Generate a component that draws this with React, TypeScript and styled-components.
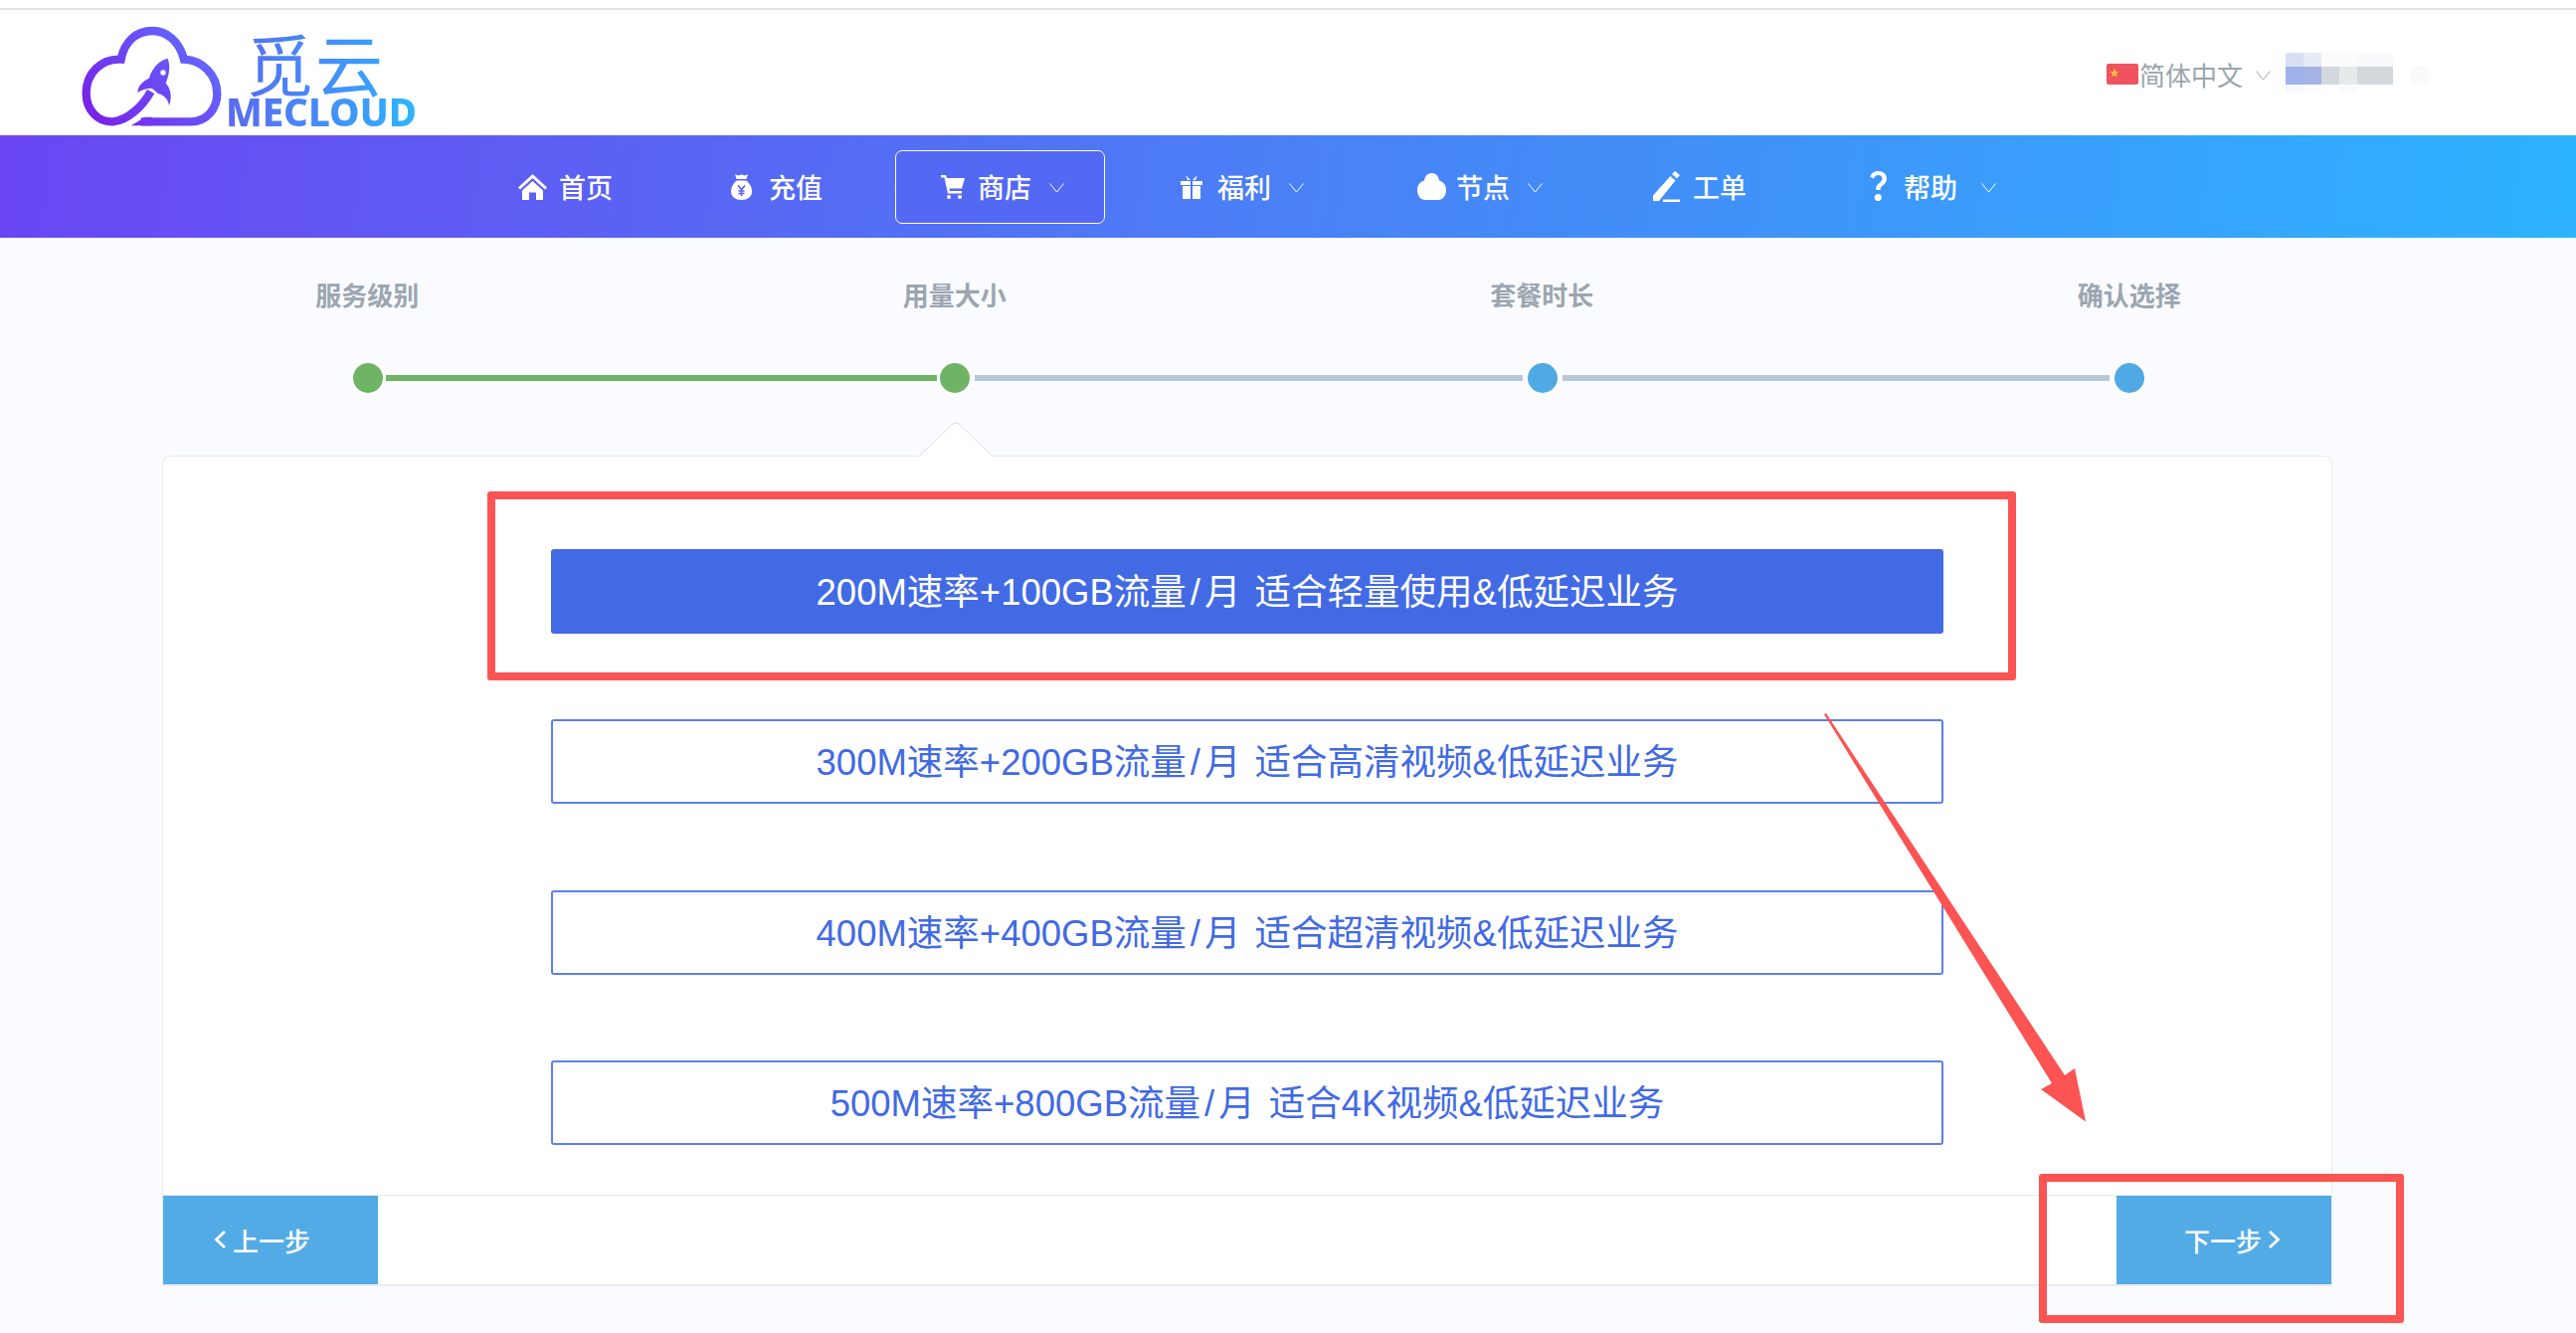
import { ReactNode } from "react"
import styled, { createGlobalStyle } from "styled-components"

const CJK = `"Liberation Sans", "Noto Sans CJK SC", sans-serif`

const GlobalStyle = createGlobalStyle`
	html, body {
		margin: 0;
		padding: 0;
		background: #fafbff;
		font-family: ${CJK};
	}
	* {
		box-sizing: border-box;
	}
`

/* ---------- data ---------- */

const mosaicRows = [
	["#d9dff5", "#e6eaf8", "#fafbfb", "#fafbfb", "#f8f9fa", "#f8f9fa", "#ffffff", "#ffffff"],
	["#a0b2ea", "#a5b4e4", "#d3d8dc", "#e6e9ea", "#d3d8dc", "#d3d8dc", "#ffffff", "#fafafa"],
	["#f7f8fd", "#fcfcfe", "#ffffff", "#fbfbfb", "#ffffff", "#ffffff", "#ffffff", "#ffffff"]
]

const options = [
	["200M速率+100GB流量", "月 适合轻量使用&低延迟业务"],
	["300M速率+200GB流量", "月 适合高清视频&低延迟业务"],
	["400M速率+400GB流量", "月 适合超清视频&低延迟业务"],
	["500M速率+800GB流量", "月 适合4K视频&低延迟业务"]
]

const steps = [
	{ label: "服务级别", color: "#6fb365" },
	{ label: "用量大小", color: "#6fb365" },
	{ label: "套餐时长", color: "#4fa9e4" },
	{ label: "确认选择", color: "#4fa9e4" }
]

/* ---------- icons ---------- */

const HomeIcon = () => (
	<svg width="29" height="26" viewBox="0 0 29 26" fill="#fff">
		<path d="M14.5 0 29 13.5l-2 2L14.5 4 2 15.500l-2-2z" />
		<path d="M14.500 7 25 16.500V26h-7v-7.500h-7V26H4v-9.500z" />
	</svg>
)

const BagIcon = () => (
	<svg width="21" height="26" viewBox="0 0 21 26">
		<path fill="#fff" d="M4 0l3 1.500L10.500.5 14 1.500 17 0l-1.500 5h-10z" />
		<path fill="#fff" d="M6 6.500h9c3 2 6 6 6 11 0 5.500-4.500 8.500-10.500 8.500S0 23 0 17.500c0-5 3-9 6-11z" />
		<path fill="none" stroke="#5560f0" strokeWidth="1.500" d="M7 11.500l3.500 4 3.500-4M10.500 15.500V22M7.500 17h6M7.500 19.500h6" />
	</svg>
)

const CartIcon = () => (
	<svg width="24" height="24" viewBox="0 0 24 24" fill="#fff">
		<path d="M0 0h5l1 3h18l-3 10.500H8.500l.5 2.500h12v2.500H7L3.500 2.500H0z" />
		<circle cx="8" cy="22" r="2" />
		<circle cx="19" cy="22" r="2" />
	</svg>
)

const GiftIcon = () => (
	<svg width="22" height="24" viewBox="0 0 22 24" fill="#fff">
		<path d="M0 6h10v4H0zM12 6h10v4H12zM2 11h8v13H2zM12 11h8v13h-8z" />
		<path d="M5 0l5 5H7zM17 0l-5 5h3z" />
	</svg>
)

const CloudIcon = () => (
	<svg width="29" height="27" viewBox="0 0 29 27" fill="#fff">
		<path d="M14.500 0c4 0 7 3 7.500 7.500 4 1 7 4.500 7 9.500 0 6-3.500 10-8 10H8c-4.500 0-8-4-8-10 0-5 3-8.500 7-9.500C7.500 3 10.500 0 14.500 0z" />
	</svg>
)

const PenIcon = () => (
	<svg width="27" height="32" viewBox="0 0 27 32" fill="#fff">
		<path d="M19 3 22 0l5 4-3 3.500zM17.500 5l5 4.500L6 30H0v-5.500z" />
		<path d="M10 28.500h17V31H10z" />
	</svg>
)

const QuestionIcon = () => (
	<svg width="17" height="31" viewBox="0 0 17 31" fill="#fff">
		<path d="M0 5.500C1.500 2 4.500 0 8.500 0 13.500 0 17 3 17 7.500c0 3.500-2 5.500-4.500 7.500-1.500 1.200-2 2-2 4H6c0-3.500 1-5 3.500-7 1.800-1.500 3-2.700 3-4.500 0-2.200-1.800-3.500-4-3.500S4.800 5.200 4 7.500z" />
		<circle cx="8.200" cy="26.500" r="3.500" />
	</svg>
)

const Chevron = ({ gap = 18 }: { gap?: number }) => (
	<ChevronSvg viewBox="0 0 15 10" $gap={gap}>
		<path d="M.5.500l7 8.500 7-8.500" fill="none" stroke="currentColor" strokeWidth="1" />
	</ChevronSvg>
)

const LogoMark = () => (
	<svg width="160" height="120" viewBox="0 0 480 360">
		<defs>
			<linearGradient id="logoStroke" gradientUnits="userSpaceOnUse" x1="70" y1="330" x2="400" y2="60">
				<stop offset="0" stopColor="#7a1fe8" />
				<stop offset="1" stopColor="#5f6cff" />
			</linearGradient>
		</defs>
		<path
			fill="none"
			stroke="url(#logoStroke)"
			strokeWidth="25"
			d="M215 316H365C415 316 445 275 445 232C445 175 400 130 345 128C330 70 290 42 250 42C200 42 165 75 155 128C95 125 50 170 50 230C50 280 85 318 130 316C175 312 220 270 245 225"
		/>
		<path fill="url(#logoStroke)" d="M185 328 228 302H250V328Z" />
		<path
			fill="url(#logoStroke)"
			d="M296 125C270 130 248 155 240 185C218 195 205 210 205 228C220 218 235 215 248 215L268 232C285 235 298 250 300 268C310 240 305 215 290 200C300 175 305 150 296 125Z"
		/>
		<circle cx="282" cy="168" r="8" fill="#fff" />
	</svg>
)

const NextArrow = () => (
	<ArrowSvg viewBox="0 0 290 440">
		<path fill="#fc5353" d="M12 10 14 9 254 373 264 366 275 419.500 230 387 241 381Z" />
	</ArrowSvg>
)

/* ---------- page ---------- */

interface NavEntry {
	icon: ReactNode
	label: string
	gap: number
	after?: number
	chevronGap?: number
	menu?: boolean
	active?: boolean
}

const navItems: NavEntry[] = [
	{ icon: <HomeIcon />, label: "首页", gap: 12 },
	{ icon: <BagIcon />, label: "充值", gap: 17 },
	{ icon: <CartIcon />, label: "商店", gap: 13, after: 3, menu: true, active: true },
	{ icon: <GiftIcon />, label: "福利", gap: 15, menu: true },
	{ icon: <CloudIcon />, label: "节点", gap: 10, after: -3, menu: true },
	{ icon: <PenIcon />, label: "工单", gap: 13, after: 5 },
	{ icon: <QuestionIcon />, label: "帮助", gap: 17, chevronGap: 24, menu: true }
]

const App = () => (
	<Page>
		<GlobalStyle />
		<TopStrip />
		<Header>
			<Logo>
				<LogoMark />
				<LogoText>
					<LogoHan>觅云</LogoHan>
					<LogoLatin>MECLOUD</LogoLatin>
				</LogoText>
			</Logo>
			<UserArea>
				<LangSwitch>
					<Flag>
						<svg width="12" height="14" viewBox="0 0 12 14" fill="#f7c232">
							<path d="M6 3l1.300 3 3 .2-2.300 2 .8 3.200L6 9.600 3.200 11.400 4 8.200 1.700 6.200l3-.2z" />
						</svg>
					</Flag>
					简体中文
					<LangChevron>
						<Chevron />
					</LangChevron>
				</LangSwitch>
				<Mosaic>
					{mosaicRows.flat().map((color, i) => (
						<div key={i} style={{ background: color }} />
					))}
				</Mosaic>
			</UserArea>
		</Header>
		<Nav>
			{navItems.map(item => (
				<NavItem key={item.label} $active={item.active} $menu={item.menu} $after={item.after ?? 0}>
					<NavIcon $gap={item.gap}>{item.icon}</NavIcon>
					{item.label}
					{item.menu && <Chevron gap={item.chevronGap} />}
				</NavItem>
			))}
		</Nav>
		<Labels>
			{steps.map(step => (
				<StepLabel key={step.label}>{step.label}</StepLabel>
			))}
		</Labels>
		<Track>
			{steps.map((step, i) => (
				<TrackPart key={step.label} $last={i === steps.length - 1}>
					<Dot $color={step.color} />
					{i < steps.length - 1 && <Connector $done={i === 0} />}
				</TrackPart>
			))}
		</Track>
		<Card>
			<Notch viewBox="0 0 76 36">
				<path d="M0 35.500 35 2Q38 0 41 2L76 35.500" fill="#fff" stroke="#d8dce4" strokeWidth="1" />
			</Notch>
			<OptionList>
				{options.map(([before, after], i) => (
					<OptionButton key={before} $selected={i === 0}>
						{before}
						<Slash>/</Slash>
						{after}
					</OptionButton>
				))}
			</OptionList>
			<CardFooter>
				<StepButton $shift="right">
					<ButtonChevron viewBox="0 0 13 18">
						<path d="M11 1 2.500 9l8.500 8" />
					</ButtonChevron>
					上一步
				</StepButton>
				<StepButton $shift="left">
					下一步
					<ButtonChevron viewBox="0 0 13 18">
						<path d="M2 1l8.500 8L2 17" />
					</ButtonChevron>
				</StepButton>
			</CardFooter>
		</Card>
		<HighlightOption />
		<HighlightNext />
		<NextArrow />
	</Page>
)

export default App

// Styled Components

const Page = styled.div`
	position: relative;
	width: 2590px;
	height: 1340px;
	overflow: hidden;
	background: #fafbff;
`

const TopStrip = styled.div`
	height: 10px;
	background: #fff;
	border-bottom: 2px solid #e2e2e2;
`

const Header = styled.header`
	display: flex;
	align-items: center;
	justify-content: space-between;
	height: 126px;
	padding: 0 148px 0 70px;
	background: #fff;
`

const Logo = styled.div`
	display: flex;
	align-items: flex-start;
	margin-top: 7px;
`

const LogoText = styled.div`
	display: flex;
	flex-direction: column;
	width: 195px;
	background: linear-gradient(90deg, #5a6cf0, #3b9cfb 70%, #2bbcff);
	-webkit-background-clip: text;
	background-clip: text;
	color: transparent;
`

const LogoHan = styled.div`
	margin: 16px 0 0 17px;
	font-family: "Noto Sans CJK SC", sans-serif;
	font-size: 68px;
	line-height: 60px;
	letter-spacing: 2px;
`

const LogoLatin = styled.div`
	margin: 4px 0 0 -3px;
	font-family: "Noto Sans", sans-serif;
	font-size: 38.500px;
	font-weight: 800;
	line-height: 30px;
`

const UserArea = styled.div`
	display: flex;
	align-items: center;
`

const LangSwitch = styled.div`
	display: flex;
	align-items: center;
	margin-top: 2px;
	color: #9aa5ac;
	font-size: 26px;
`

const Flag = styled.span`
	display: flex;
	align-items: flex-start;
	justify-content: flex-start;
	width: 32px;
	height: 21px;
	padding: 2px 0 0 2px;
	margin-right: 1px;
	background: #f0525f;
	border-radius: 2px;
`

const LangChevron = styled.span`
	display: flex;
	margin: 0 0 0 -5px;
	color: #9aa5ac;
`

const Mosaic = styled.div`
	display: grid;
	grid-template-columns: repeat(8, 18px);
	grid-template-rows: 14px 18px 8px;
	margin-left: 15px;
`

const Nav = styled.nav`
	display: flex;
	align-items: center;
	gap: 27px;
	height: 103px;
	padding-left: 475px;
	background: linear-gradient(97deg, #6a46f2 0%, #4a80f6 50%, #2db3ff 100%);
`

const NavItem = styled.a<{ $active?: boolean; $menu?: boolean; $after: number }>`
	display: flex;
	align-items: center;
	height: 74px;
	margin-right: ${p => p.$after}px;
	padding: 0 ${p => (p.$menu ? 40 : 45)}px 0 45px;
	border: 1.5px solid ${p => (p.$active ? "#fff" : "transparent")};
	border-radius: 7px;
	background: ${p => (p.$active ? "#5469f3" : "transparent")};
	color: #fff;
	font-size: 27px;
	font-weight: 500;
`

const NavIcon = styled.span<{ $gap: number }>`
	display: flex;
	margin-right: ${p => p.$gap}px;
`

const ChevronSvg = styled.svg<{ $gap: number }>`
	flex: none;
	width: 15px;
	height: 10px;
	margin-left: ${p => p.$gap}px;
	margin-top: 3px;
`

const Labels = styled.div`
	display: grid;
	grid-template-columns: repeat(4, 590.5px);
	padding: 44px 0 0 74px;
`

const StepLabel = styled.div`
	color: #9ba6b0;
	font-size: 26px;
	font-weight: 700;
	line-height: 30px;
	text-align: center;
`

const Track = styled.div`
	display: flex;
	width: 1807px;
	margin: 49px 0 0 352px;
`

const TrackPart = styled.div<{ $last: boolean }>`
	display: flex;
	align-items: center;
	flex: ${p => (p.$last ? "none" : 1)};
`

const Dot = styled.span<{ $color: string }>`
	flex: none;
	width: 36px;
	height: 36px;
	border: 3px solid #fff;
	border-radius: 50%;
	background: ${p => p.$color};
`

const Connector = styled.span<{ $done: boolean }>`
	flex: 1;
	height: 6px;
	margin: 0 ${p => (p.$done ? 0 : 2)}px;
	background: ${p => (p.$done ? "#6fb365" : "#b8c8d6")};
`

const Card = styled.section`
	position: relative;
	width: 2182px;
	margin: 60px 0 0 163px;
	background: #fff;
	border: 1px solid #e9ebf2;
	border-radius: 8px 8px 0 0;
`

const Notch = styled.svg`
	position: absolute;
	top: -35px;
	left: 759px;
	width: 76px;
	height: 36px;
`

const OptionList = styled.div`
	display: flex;
	flex-direction: column;
	gap: 86.330px;
	padding: 93px 390px 50px 390px;
`

const OptionButton = styled.button<{ $selected: boolean }>`
	height: 85px;
	padding: 0 0 4px;
	border: 2px solid ${p => (p.$selected ? "#426ae4" : "#5c80ee")};
	border-radius: 3px;
	background: ${p => (p.$selected ? "#426ae4" : "#fff")};
	color: ${p => (p.$selected ? "#fff" : "#426ae4")};
	font-family: ${CJK};
	font-size: 36.500px;
	word-spacing: 4px;
`

const Slash = styled.span`
	margin: 0 4px;
`

const CardFooter = styled.div`
	display: flex;
	justify-content: space-between;
	height: 91px;
	border-top: 1px solid #e8eaee;
	border-bottom: 1px solid #e8eaee;
`

const StepButton = styled.button<{ $shift: "left" | "right" }>`
	display: flex;
	align-items: center;
	justify-content: center;
	gap: 6px;
	width: 216px;
	height: 89px;
	padding: ${p => (p.$shift === "right" ? "0 17px 0 0" : "0 0 0 17px")};
	border: 0;
	background: #53abe6;
	color: #fff;
	font-family: ${CJK};
	font-size: 26px;
	font-weight: 500;
`

const ButtonChevron = styled.svg`
	width: 13px;
	height: 18px;
	fill: none;
	stroke: #fff;
	stroke-width: 2.800;
`

const HighlightOption = styled.div`
	position: absolute;
	left: 490px;
	top: 494px;
	width: 1537px;
	height: 190px;
	border: 8px solid #fc5353;
	border-radius: 3px;
`

const HighlightNext = styled.div`
	position: absolute;
	left: 2050px;
	top: 1180px;
	width: 367px;
	height: 150px;
	border: 8px solid #fc5353;
	border-radius: 3px;
`

const ArrowSvg = styled.svg`
	position: absolute;
	left: 1822px;
	top: 708px;
	width: 290px;
	height: 440px;
`
